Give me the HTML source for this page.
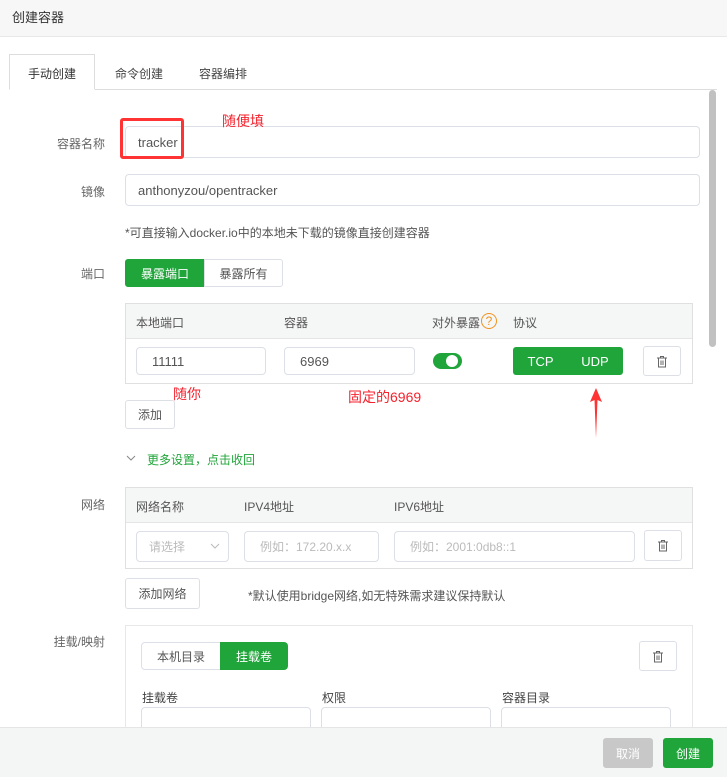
<!DOCTYPE html>
<html><head><meta charset="utf-8">
<style>
*{box-sizing:border-box;margin:0;padding:0}
body{width:727px;height:777px;overflow:hidden;background:#fff;font-family:"Liberation Sans","Noto Sans CJK SC",sans-serif;font-size:12px;color:#555;position:relative}
.a{position:absolute}
.inp{position:absolute;border:1px solid #dcdfe6;border-radius:4px;background:#fff;color:#555;padding-left:12px;display:flex;align-items:center;font-size:13px}
.ph{color:#bbb;font-size:12px}
.lbl{position:absolute;width:105px;text-align:right;color:#666;font-size:12px}
.btn{position:absolute;border:1px solid #dcdfe6;border-radius:3px;background:#fff;display:flex;align-items:center;justify-content:center;color:#555;font-size:12px}
.g{background:#20a53a;color:#fff;border-color:#20a53a}
.red{color:#f5222d;font-size:14px;position:absolute}
.th{background:#f5f6f6;border-bottom:1px solid #e5e5e5}
svg.tr{width:12px;height:13px}
</style></head><body>
<div class="a" style="left:0;top:0;width:727px;height:37px;background:#f7f7f7;border-bottom:1px solid #e8e8e8"></div>
<div class="a" style="left:12px;top:7px;font-size:13px;color:#333">创建容器</div>

<div class="a" style="left:9px;top:89px;width:708px;height:1px;background:#ddd"></div>
<div class="a" style="left:9px;top:54px;width:86px;height:36px;border:1px solid #ddd;border-bottom:1px solid #fff;background:#fff"></div>
<div class="a" style="left:28px;top:65px;color:#333">手动创建</div>
<div class="a" style="left:115px;top:65px;color:#444">命令创建</div>
<div class="a" style="left:199px;top:65px;color:#444">容器编排</div>

<div class="a" style="left:709px;top:90px;width:7px;height:257px;background:#c1c1c1;border-radius:4px"></div>

<div class="lbl" style="left:0;top:135px">容器名称</div>
<div class="inp" style="left:125px;top:126px;width:575px;height:32px">tracker</div>
<div class="a" style="left:120px;top:118px;width:64px;height:41px;border:3px solid #f33;border-radius:3px"></div>
<div class="red" style="left:222px;top:111px">随便填</div>

<div class="lbl" style="left:0;top:183px">镜像</div>
<div class="inp" style="left:125px;top:174px;width:575px;height:32px">anthonyzou/opentracker</div>
<div class="a" style="left:125px;top:224px;color:#555">*可直接输入docker.io中的本地未下载的镜像直接创建容器</div>

<div class="lbl" style="left:0;top:265px">端口</div>
<div class="btn g" style="left:125px;top:259px;width:80px;height:28px;border-radius:3px 0 0 3px">暴露端口</div>
<div class="btn" style="left:204px;top:259px;width:79px;height:28px;border-radius:0 3px 3px 0">暴露所有</div>

<div class="a" style="left:125px;top:303px;width:568px;height:81px;border:1px solid #e0e0e0"></div>
<div class="a th" style="left:126px;top:304px;width:566px;height:35px"></div>
<div class="a" style="left:136px;top:314px">本地端口</div>
<div class="a" style="left:284px;top:314px">容器</div>
<div class="a" style="left:432px;top:314px">对外暴露</div>
<div class="a" style="left:481px;top:313px;width:16px;height:16px;border:1px solid #f0931e;border-radius:50%;color:#f0931e;font-size:12px;line-height:14px;text-align:center">?</div>
<div class="a" style="left:513px;top:314px">协议</div>
<div class="inp" style="left:136px;top:347px;width:130px;height:28px;padding-left:15px">11111</div>
<div class="inp" style="left:284px;top:347px;width:131px;height:28px;padding-left:15px">6969</div>
<div class="a" style="left:433px;top:353px;width:29px;height:16px;border-radius:8px;background:#20a53a"></div>
<div class="a" style="left:446px;top:355px;width:12px;height:12px;border-radius:50%;background:#fff"></div>
<div class="btn g" style="left:513px;top:347px;width:55px;height:28px;border-radius:3px 0 0 3px;border-right:1px solid #7dcb8b;font-size:13px">TCP</div>
<div class="btn g" style="left:567px;top:347px;width:56px;height:28px;border-radius:0 3px 3px 0;font-size:13px">UDP</div>
<div class="btn" style="left:643px;top:346px;width:38px;height:30px"><svg class="tr" viewBox="0 0 12 13"><path d="M1 3h10M4.5 3V1.5h3V3M2.5 3.5v8.5h7V3.5M5 5.5v4.5M7 5.5v4.5" fill="none" stroke="#666" stroke-width="1"/></svg></div>
<div class="red" style="left:173px;top:384px">随你</div>
<div class="red" style="left:348px;top:387px">固定的6969</div>
<svg class="a" style="left:588px;top:388px" width="16" height="52"><polygon points="8,0 14,14 9.5,12 8,50 6.5,12 2,14" fill="#f33"/></svg>
<div class="btn" style="left:125px;top:400px;width:50px;height:29px">添加</div>

<svg class="a" style="left:126px;top:454px" width="10" height="8"><path d="M1 2l4 4 4-4" fill="none" stroke="#888" stroke-width="1"/></svg>
<div class="a" style="left:147px;top:451px;color:#20a53a">更多设置，点击收回</div>

<div class="lbl" style="left:0;top:496px">网络</div>
<div class="a" style="left:125px;top:487px;width:568px;height:82px;border:1px solid #e0e0e0"></div>
<div class="a th" style="left:126px;top:488px;width:566px;height:35px"></div>
<div class="a" style="left:136px;top:498px">网络名称</div>
<div class="a" style="left:244px;top:498px">IPV4地址</div>
<div class="a" style="left:394px;top:498px">IPV6地址</div>
<div class="inp ph" style="left:136px;top:531px;width:93px;height:31px">请选择</div>
<svg class="a" style="left:210px;top:543px" width="10" height="7"><path d="M1 1l4 4 4-4" fill="none" stroke="#bbb" stroke-width="1"/></svg>
<div class="inp ph" style="left:244px;top:531px;width:135px;height:31px;padding-left:15px">例如：172.20.x.x</div>
<div class="inp ph" style="left:394px;top:531px;width:241px;height:31px;padding-left:15px">例如：2001:0db8::1</div>
<div class="btn" style="left:644px;top:530px;width:38px;height:31px"><svg class="tr" viewBox="0 0 12 13"><path d="M1 3h10M4.5 3V1.5h3V3M2.5 3.5v8.5h7V3.5M5 5.5v4.5M7 5.5v4.5" fill="none" stroke="#666" stroke-width="1"/></svg></div>
<div class="btn" style="left:125px;top:578px;width:75px;height:31px">添加网络</div>
<div class="a" style="left:248px;top:587px">*默认使用bridge网络,如无特殊需求建议保持默认</div>

<div class="lbl" style="left:0;top:633px">挂载/映射</div>
<div class="a" style="left:125px;top:625px;width:568px;height:120px;border:1px solid #e8e8e8"></div>
<div class="btn" style="left:141px;top:642px;width:80px;height:28px;border-radius:4px 0 0 4px">本机目录</div>
<div class="btn g" style="left:220px;top:642px;width:68px;height:28px;border-radius:0 4px 4px 0">挂载卷</div>
<div class="btn" style="left:639px;top:641px;width:38px;height:30px"><svg class="tr" viewBox="0 0 12 13"><path d="M1 3h10M4.5 3V1.5h3V3M2.5 3.5v8.5h7V3.5M5 5.5v4.5M7 5.5v4.5" fill="none" stroke="#666" stroke-width="1"/></svg></div>
<div class="a" style="left:142px;top:689px;color:#444">挂载卷</div>
<div class="a" style="left:322px;top:689px;color:#444">权限</div>
<div class="a" style="left:502px;top:689px;color:#444">容器目录</div>
<div class="inp" style="left:141px;top:707px;width:170px;height:30px"></div>
<div class="inp" style="left:321px;top:707px;width:170px;height:30px"></div>
<div class="inp" style="left:501px;top:707px;width:170px;height:30px"></div>

<div class="a" style="left:0;top:727px;width:727px;height:50px;background:#f4f6f5;border-top:1px solid #e5e5e5"></div>
<div class="btn" style="left:603px;top:738px;width:50px;height:30px;background:#c8c8c8;border-color:#c8c8c8;color:#fff">取消</div>
<div class="btn g" style="left:663px;top:738px;width:50px;height:30px">创建</div>
</body></html>
